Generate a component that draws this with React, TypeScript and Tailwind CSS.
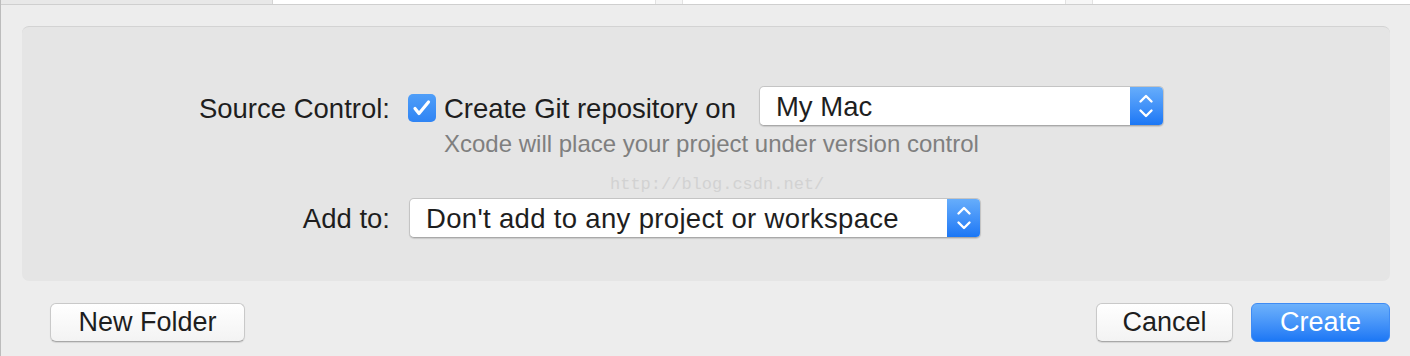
import { type ReactNode } from "react";

function Chevrons() {
  return (
    <svg width="16" height="30" viewBox="0 0 16 30" fill="none" stroke="white" strokeWidth={2.4} strokeLinecap="round" strokeLinejoin="round">
      <path d="M2.5 10.5 8 5l5.5 5.5" />
      <path d="M2.5 19.5 8 25l5.5-5.5" />
    </svg>
  );
}

function PopUp({ label, width, wide }: { label: string; width: string; wide?: boolean }) {
  return (
    <div
      className={`flex h-[40px] ${width} items-stretch overflow-hidden rounded-[5px] border border-[#c4c4c4] border-b-[#a9a9a9] bg-white shadow-[0_1px_1px_rgba(0,0,0,0.12)]`}
    >
      <div
        className={`flex flex-1 items-center pl-[16px] pt-[1px] text-[27.5px] leading-none text-[#1e1e1e] ${
          wide ? "tracking-[0.33px]" : ""
        }`}
      >
        {label}
      </div>
      <div className="flex w-[33px] items-center justify-center bg-gradient-to-b from-[#66adfb] to-[#1a77f5]">
        <Chevrons />
      </div>
    </div>
  );
}

function Button({ children, primary, width }: { children: ReactNode; primary?: boolean; width: string }) {
  return (
    <button
      className={`flex h-[39px] ${width} items-center justify-center rounded-[6px] border text-[27px] leading-none ${
        primary
          ? "border-[#3f8cf4] bg-gradient-to-b from-[#6db1fb] to-[#1b77f5] text-white"
          : "border-[#c9c9c9] border-b-[#a8a8a8] bg-gradient-to-b from-white to-[#f3f3f3] text-[#1e1e1e] shadow-[0_1px_1px_rgba(0,0,0,0.1)]"
      }`}
    >
      {children}
    </button>
  );
}

export default function App() {
  return (
    <div className="flex h-[356px] w-[1410px] flex-col border-l border-[#bcbcbc] bg-[#ededed] font-['Liberation_Sans',Arial,sans-serif]">
      {/* column strip from the view above */}
      <div className="flex h-[4px]">
        <div className="w-[271px] bg-[#e8e8e8]" />
        <div className="w-[383px] border-l border-[#d4d4d4] bg-white" />
        <div className="w-[28px] border-x border-[#e2e2e2] bg-[#f6f6f6]" />
        <div className="w-[382px] bg-white" />
        <div className="w-[28px] border-x border-[#e2e2e2] bg-[#f6f6f6]" />
        <div className="flex-1 bg-white" />
      </div>
      <div className="h-px bg-[#cfcfcf]" />

      <div className="ml-[21px] mt-[21px] h-[255px] w-[1368px] rounded-[7px] border-t border-[#d3d3d3] bg-[#e5e5e5] pt-[59px]">
        <div className="grid grid-cols-[368px_auto] gap-x-[18px] text-[#1e1e1e]">
          <div className="flex items-center justify-end pt-[5px] text-[27.5px] leading-none">Source Control:</div>
          <div className="flex items-center">
            <div className="mt-[3px] flex h-[28px] w-[28px] items-center justify-center rounded-[5px] bg-gradient-to-b from-[#4f9ef8] to-[#2f84f4]">
              <svg width="28" height="28" viewBox="0 0 28 28" fill="none" stroke="white" strokeWidth={3.2} strokeLinecap="round" strokeLinejoin="round">
                <path d="M7 14.5 11 19.5 20.5 8" />
              </svg>
            </div>
            <span className="ml-[8px] pt-[5px] text-[27.5px] leading-none">Create Git repository on</span>
            <div className="ml-[23px]">
              <PopUp label="My Mac" width="w-[405px]" />
            </div>
          </div>

          <div />
          <div className="ml-[36px] mt-[4px] text-[24px] leading-[28px] text-[#7f7f7f]">
            Xcode will place your project under version control
          </div>

          <div />
          <div className="ml-[202px] mt-[17px] font-['Liberation_Mono',monospace] text-[17px] leading-[20px] text-[#d2d2d2]">
            http://blog.csdn.net/
          </div>

          <div className="mt-[3px] flex items-center justify-end pt-[2px] text-[27.5px] leading-none">Add to:</div>
          <div className="ml-px mt-[3px]">
            <PopUp label="Don't add to any project or workspace" width="w-[572px]" wide />
          </div>
        </div>
      </div>

      <div className="mt-[22px] flex items-center pl-[49px] pr-[20px]">
        <Button width="w-[195px]">New Folder</Button>
        <div className="flex-1" />
        <Button width="w-[137px]">Cancel</Button>
        <div className="w-[18px]" />
        <Button primary width="w-[139px]">Create</Button>
      </div>
    </div>
  );
}
